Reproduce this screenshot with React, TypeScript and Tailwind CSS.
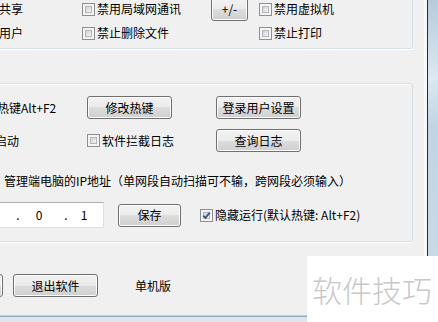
import type { ReactNode } from 'react'

// Win7-style settings dialog fragment, right part of the window

function Btn({ children, className = '' }: { children?: ReactNode; className?: string }) {
  return (
    <div
      className={
        'flex items-center justify-center shrink-0 h-[23px] rounded-[3px] border border-[#707070] bg-[linear-gradient(#f2f2f2,#ebebeb_50%,#dddddd_50%,#cfcfcf)] shadow-[inset_0_0_0_1px_#fcfcfc] text-[12px] leading-none text-black ' +
        className
      }
    >
      {children}
    </div>
  )
}

function Check({ checked = false }: { checked?: boolean }) {
  return (
    <span className="relative shrink-0 w-[13px] h-[13px] border border-[#8e8f8f] bg-[#f4f4f4] p-[2px]">
      <span className="block w-full h-full border border-[#b3b7bd] bg-[linear-gradient(135deg,#cfd3d8,#f3f3f3)]" />
      {checked && (
        <svg className="absolute left-0 top-0" width="11" height="11" viewBox="0 0 11 11">
          <path d="M2.2 5.6 L4.4 7.9 L8.8 2.6" fill="none" stroke="#3a5690" strokeWidth="1.8" />
        </svg>
      )}
    </span>
  )
}

export default function App() {
  return (
    <div className="relative w-[438px] h-[322px] overflow-hidden bg-[#f0f0f0] text-[12px] text-black font-['Noto_Sans_CJK_SC','Noto_Sans',sans-serif]">
      <div className="flex h-[315px]">
        <div className="w-[424px] shrink-0 flex flex-col">
          {/* group 1 */}
          <div className="-mt-[10px] -ml-[10px] w-[423px] h-[59px] shrink-0 border border-[#d5dfe5] rounded-[3px] shadow-[0_1px_0_#fff,inset_0_1px_0_#fff] pl-[9px] pt-[6px]">
            <div className="flex items-center h-[24px] whitespace-nowrap">
              <div className="w-[82px] shrink-0"><span className="-ml-[1px]">共享</span></div>
              <div className="w-[129px] shrink-0 flex items-center">
                <Check />
                <span className="ml-[2px]">禁用局域网通讯</span>
              </div>
              <div className="w-[48px] shrink-0 flex items-center">
                <Btn className="w-[37px] h-[15px]">+/-</Btn>
              </div>
              <div className="flex items-center">
                <Check />
                <span className="ml-[2px]">禁用虚拟机</span>
              </div>
            </div>
            <div className="flex items-center h-[24px] whitespace-nowrap">
              <div className="w-[82px] shrink-0"><span className="-ml-[1px]">用户</span></div>
              <div className="w-[129px] shrink-0 flex items-center">
                <Check />
                <span className="ml-[2px]">禁止删除文件</span>
              </div>
              <div className="w-[48px] shrink-0" />
              <div className="flex items-center">
                <Check />
                <span className="ml-[2px]">禁止打印</span>
              </div>
            </div>
          </div>

          {/* group 2 */}
          <div className="mt-[34px] -ml-[10px] w-[423px] h-[159px] shrink-0 border border-[#d5dfe5] rounded-[3px] shadow-[0_1px_0_#fff,inset_0_1px_0_#fff] pl-[9px] pt-[12px] whitespace-nowrap">
            <div className="flex items-center h-[23px]">
              <div className="w-[87px] shrink-0"><span className="-ml-[3px] block">热键Alt+F2</span></div>
              <div className="w-[129px] shrink-0"><Btn className="w-[85px]">修改热键</Btn></div>
              <Btn className="w-[85px]">登录用户设置</Btn>
            </div>
            <div className="flex items-center h-[23px] mt-[10px]">
              <div className="w-[87px] shrink-0"><span className="-ml-[5px] block">启动</span></div>
              <div className="w-[129px] shrink-0 flex items-center">
                <Check />
                <span className="ml-[2px]">软件拦截日志</span>
              </div>
              <Btn className="w-[85px]">查询日志</Btn>
            </div>
            <div className="mt-[21px] h-[16px] leading-[16px] pl-[4px]">
              管理端电脑的IP地址（单网段自动扫描可不输，跨网段必须输入）
            </div>
            <div className="mt-[13px] h-[26px] flex items-center">
              <div className="-ml-[30px] w-[134px] h-[26px] shrink-0 flex items-center justify-end bg-white border border-[#dbdfe6] border-t-[#abadb3] pr-[1px]">
                <span className="w-[6px] text-center">.</span>
                <span className="w-[42px] text-center pr-[6px]">0</span>
                <span className="w-[6px] text-center">.</span>
                <span className="w-[33px] text-center pr-[3px]">1</span>
              </div>
              <Btn className="ml-[14px] w-[63px]">保存</Btn>
              <span className="ml-[19px] flex items-center">
                <Check checked />
              </span>
              <span className="ml-[2px]">隐藏运行(默认热键: Alt+F2)</span>
            </div>
          </div>

          {/* bottom buttons */}
          <div className="mt-[32px] h-[23px] flex items-center whitespace-nowrap">
            <Btn className="-ml-[80px] w-[83px]" />
            <Btn className="ml-[10px] w-[85px]">退出软件</Btn>
            <span className="ml-[37px]">单机版</span>
          </div>
        </div>
        <div className="w-[3px] shrink-0 bg-[#f6f8fa]" />
        <div className="w-[1px] shrink-0 bg-[#12304c]" />
        <div className="flex-1 bg-[linear-gradient(165deg,#b7cadc,#dce8f2_25%,#c2d4e4_40%,#cddbe7)]" />
      </div>
      <div className="h-[1px] bg-[#a9d8ea]" />
      <div className="h-[1px] bg-[#8eaec2]" />
      <div className="h-[5px] bg-[#dfe4ea]" />

      {/* watermark */}
      <div className="absolute left-[307px] top-[256px] w-[131px] h-[66px] bg-white pl-[5px] pt-[18px]">
        <div className="text-[30px] leading-none font-light text-[#c8c8c8] whitespace-nowrap">软件技巧</div>
      </div>
    </div>
  )
}
